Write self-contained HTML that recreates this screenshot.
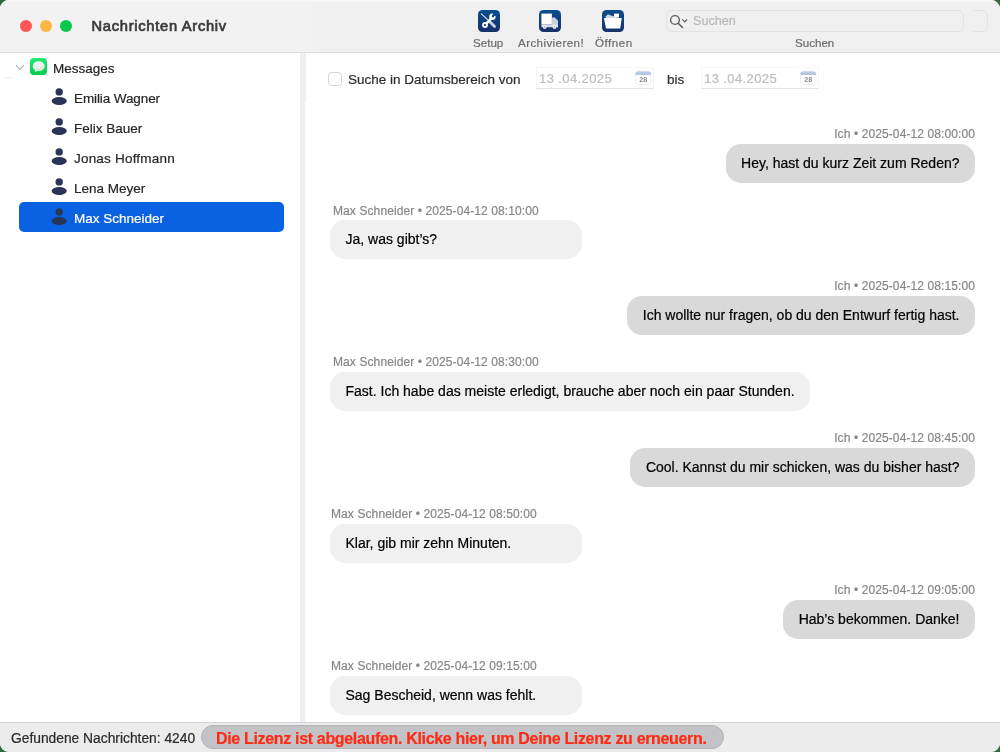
<!DOCTYPE html>
<html><head><meta charset="utf-8">
<style>
*{margin:0;padding:0;box-sizing:border-box}
html,body{width:1000px;height:752px;overflow:hidden;background:#2f6a3c;font-family:"Liberation Sans",sans-serif}
.win{will-change:transform;-webkit-text-stroke:0.2px currentColor;position:absolute;left:0;top:0;width:1000px;height:752px;background:#fff;border-radius:9px;overflow:hidden}
.abs{position:absolute;white-space:nowrap;line-height:1}
.toolbar{position:absolute;left:0;top:0;width:1000px;height:53px;background:#f0f0f0;border-bottom:1px solid #dedede}
.tl{position:absolute;top:20px;width:12px;height:12px;border-radius:50%}
.title{left:91.5px;top:19.4px;font-size:14.7px;font-weight:normal;color:#3b3b3b;-webkit-text-stroke:0.7px #3b3b3b;letter-spacing:0.72px}
.tbicon{position:absolute;top:10px;width:22px;height:22px}
.tblabel{top:37px;font-size:11.6px;color:#6b6b6b}
.search{position:absolute;left:666px;top:10px;width:298px;height:22px;border:1px solid #e3e3e3;border-radius:6px;background:#f0f0f0}
.search2{position:absolute;left:973px;top:10px;width:15px;height:22px;border:1px solid #e3e3e3;border-radius:6px;border-left:none;border-top-left-radius:0;border-bottom-left-radius:0;background:#f0f0f0}
.splitter{position:absolute;left:300px;top:53px;width:5px;height:669px;background:#efefef}
.srow{position:absolute;left:19px;width:265px;height:29px;border-radius:5px}
.sel{background:#0a62e2}
.name{left:74px;font-size:13.5px;color:#262626}
.person{position:absolute;left:51px;width:17px;height:18px}
.meta{font-size:12px;color:#878787;letter-spacing:0.1px}
.bub{position:absolute;height:39px;border-radius:15px;font-size:14px;color:#000;line-height:39px;padding:0 15.5px;white-space:nowrap}
.me{background:#d9d9d9;right:25px}
.them{background:#f0f0f0;left:330px;min-width:252px}
.status{position:absolute;left:0;top:722px;width:1000px;height:30px;background:#ececec;border-top:1px solid #d3d3d8}
.pill{position:absolute;left:201px;top:725px;width:523px;height:24px;border-radius:12px;background:#c3c3c7;border:1px solid #b3b3b7}
.date{position:absolute;top:67px;width:118px;height:22px;border:1px solid #f5f5f5;border-bottom:1px solid #e2e2e2}
.dtext{font-size:13px;color:#bdbdbd;letter-spacing:0.4px}
</style></head><body>
<div class="win">
  <div class="toolbar"><div class="abs" style="left:0;top:0;width:320px;height:52px;background:linear-gradient(90deg,#f2f2f2 0,#f2f2f2 308px,#f0f0f0 320px)"></div><div class="abs" style="left:0;top:0;width:1000px;height:2px;background:linear-gradient(#f8f8f8,#f3f3f3)"></div>
    <div class="tl" style="left:20px;background:#ff5458"></div>
    <div class="tl" style="left:40px;background:#ffb541"></div>
    <div class="tl" style="left:60px;background:#0ac84c"></div>
    <div class="abs title">Nachrichten Archiv</div>
    <svg class="tbicon" style="left:478px" viewBox="0 0 22 22">
      <defs><linearGradient id="g1" x1="0" y1="0" x2="0" y2="1"><stop offset="0" stop-color="#0b4d8c"/><stop offset="1" stop-color="#17306a"/></linearGradient></defs>
      <rect x="0" y="0" width="22" height="22" rx="4.5" fill="url(#g1)"/>
      <path d="M3.4 3.9 L9.6 9.6" stroke="#e3e9f0" stroke-width="1.1" stroke-linecap="round"/>
      <path d="M11 11 L16.6 16.6" stroke="#c9d3df" stroke-width="2.8" stroke-linecap="round"/>
      <path d="M7.4 14.6 L14 7.6" stroke="#fff" stroke-width="2.5" stroke-linecap="round"/>
      <circle cx="7" cy="15" r="2.9" fill="#fff"/><circle cx="7" cy="15" r="1.1" fill="#17306a"/>
      <circle cx="14.4" cy="6.8" r="3.2" fill="#fff"/><path d="M13.6 6.9 L15.5 2.6 L18.8 5.6 Z" fill="#0b4d8c"/><circle cx="15" cy="6.3" r="1.1" fill="#0b4d8c"/>
    </svg>
    <svg class="tbicon" style="left:539px" viewBox="0 0 22 22">
      <rect x="0" y="0" width="22" height="22" rx="4.5" fill="url(#g1)"/>
      <rect x="2.4" y="3.6" width="10.5" height="10.8" fill="#fff"/>
      <path d="M12.9 7.4 H15.8 L19 10.6 V17.3 H12.9 Z" fill="#c7d1de"/>
      <rect x="2.4" y="14.3" width="16.6" height="2.9" fill="#d6dde6"/>
      <circle cx="5.7" cy="17" r="1.9" fill="#e9eef3"/><circle cx="15.5" cy="17" r="1.9" fill="#e9eef3"/>
      <circle cx="5.7" cy="17" r="0.6" fill="#6f87a6"/><circle cx="15.5" cy="17" r="0.6" fill="#6f87a6"/>
    </svg>
    <svg class="tbicon" style="left:602px" viewBox="0 0 22 22">
      <rect x="0" y="0" width="22" height="22" rx="4.5" fill="url(#g1)"/>
      <path d="M12 3.6 H17 V7.5 H12 Z" fill="#fff"/>
      <path d="M3.5 6.5 L6 4.2 L9 5.5 L17 8 L16 9 H4 Z" fill="#d2d9e1"/>
      <path d="M1.9 8.1 H19.8 L18.2 18.4 H4 Z" fill="#fff"/>
    </svg>
    <div class="abs tblabel" style="left:473px">Setup</div>
    <div class="abs tblabel" style="left:518px;letter-spacing:0.4px">Archivieren!</div>
    <div class="abs tblabel" style="left:595px;letter-spacing:0.5px">Öffnen</div>
    <div class="search"></div>
    <svg class="abs" style="left:669px;top:14px" width="22" height="16" viewBox="0 0 22 16">
      <circle cx="6" cy="6" r="4.4" fill="none" stroke="#5f5f5f" stroke-width="1.4"/>
      <path d="M9.2 9.2 L13.5 13.5" stroke="#5f5f5f" stroke-width="1.5" stroke-linecap="round"/>
      <path d="M13.3 5.4 L15.7 7.8 L18.1 5.4" fill="none" stroke="#5f5f5f" stroke-width="1.2"/>
    </svg>
    <div class="abs" style="left:693px;top:14.5px;font-size:12.6px;color:#b8b8b8">Suchen</div>
    <div class="search2"></div>
    <div class="abs tblabel" style="left:795px">Suchen</div>
  </div>

  <!-- sidebar -->
  <div class="abs" style="left:5px;top:77px;width:8px;height:1px;background:#ededed"></div>
  <svg class="abs" style="left:14px;top:62px" width="12" height="10" viewBox="0 0 12 10">
    <path d="M2 3.2 L5.8 7.4 L9.8 3.2" fill="none" stroke="#b0b0b0" stroke-width="1.2"/>
  </svg>
  <svg class="abs" style="left:30px;top:58px" width="17" height="17" viewBox="0 0 17 17">
    <defs><linearGradient id="gm" x1="0" y1="0" x2="0" y2="1"><stop offset="0" stop-color="#1fea74"/><stop offset="1" stop-color="#06cb4e"/></linearGradient>
    <linearGradient id="gb" x1="0" y1="0" x2="0" y2="1"><stop offset="0" stop-color="#fff"/><stop offset="1" stop-color="#d3e6d6"/></linearGradient></defs>
    <rect width="17" height="17" rx="3.8" fill="url(#gm)"/>
    <ellipse cx="8.7" cy="8.2" rx="6" ry="5" fill="url(#gb)"/>
    <path d="M4.8 11 L5 14.3 L7.6 12.6 Z" fill="#dde9df"/>
  </svg>
  <div class="abs" style="left:53px;top:62px;font-size:13.5px;color:#262626">Messages</div>
  <div class="srow sel" style="top:202px;height:30px"></div>
  <svg class="person" style="top:88px" viewBox="0 0 17 18"><circle cx="8.2" cy="3.9" r="3.7" fill="#2a3457"/><ellipse cx="8.2" cy="13" rx="7.6" ry="4" fill="#2a3457"/></svg>
  <svg class="person" style="top:118px" viewBox="0 0 17 18"><circle cx="8.2" cy="3.9" r="3.7" fill="#2a3457"/><ellipse cx="8.2" cy="13" rx="7.6" ry="4" fill="#2a3457"/></svg>
  <svg class="person" style="top:148px" viewBox="0 0 17 18"><circle cx="8.2" cy="3.9" r="3.7" fill="#2a3457"/><ellipse cx="8.2" cy="13" rx="7.6" ry="4" fill="#2a3457"/></svg>
  <svg class="person" style="top:178px" viewBox="0 0 17 18"><circle cx="8.2" cy="3.9" r="3.7" fill="#2a3457"/><ellipse cx="8.2" cy="13" rx="7.6" ry="4" fill="#2a3457"/></svg>
  <svg class="person" style="top:208px" viewBox="0 0 17 18"><circle cx="8.2" cy="3.9" r="3.7" fill="#2a3457"/><ellipse cx="8.2" cy="13" rx="7.6" ry="4" fill="#2a3457"/></svg>
  <div class="abs name" style="top:92px;letter-spacing:-0.1px">Emilia Wagner</div>
  <div class="abs name" style="top:122px">Felix Bauer</div>
  <div class="abs name" style="top:152px;letter-spacing:0.2px">Jonas Hoffmann</div>
  <div class="abs name" style="top:182px">Lena Meyer</div>
  <div class="abs name" style="top:212px;color:#fff">Max Schneider</div>

  <div class="splitter"></div><div class="abs" style="left:305px;top:53px;width:1px;height:49px;background:#efefef"></div>

  <!-- date range -->
  <div class="abs" style="left:328px;top:71.5px;width:14px;height:14px;border:1px solid #d3d3d3;border-radius:3.5px;background:#fff"></div>
  <div class="abs" style="left:348px;top:73px;font-size:13.5px;color:#2e2e2e">Suche in Datumsbereich von</div>
  <div class="date" style="left:536px"></div>
  <div class="abs dtext" style="left:539px;top:72.3px">13 .04.2025</div>
  <svg class="abs cal" style="left:635px;top:70px" width="17" height="15" viewBox="0 0 17 15">
    <rect x="0.5" y="1.5" width="15.5" height="13" rx="2.5" fill="#fff" stroke="#e4ebf5" stroke-width="0.8"/>
    <path d="M0.5 4 Q0.5 1.5 3 1.5 H13.5 Q16 1.5 16 4 V5 H0.5 Z" fill="#b3c8e0"/><path d="M4.5 0.3 V2.5 M11.5 0.3 V2.5" stroke="#d8dde4" stroke-width="0.8"/>
    <text x="8.2" y="12.3" font-size="7.2" font-weight="bold" text-anchor="middle" fill="#8a8a8a" font-family="Liberation Sans">28</text>
  </svg>
  <div class="abs" style="left:667px;top:72.5px;font-size:13.5px;color:#2e2e2e">bis</div>
  <div class="date" style="left:701px"></div>
  <div class="abs dtext" style="left:704px;top:72.3px">13 .04.2025</div>
  <svg class="abs cal" style="left:800px;top:70px" width="17" height="15" viewBox="0 0 17 15">
    <rect x="0.5" y="1.5" width="15.5" height="13" rx="2.5" fill="#fff" stroke="#e4ebf5" stroke-width="0.8"/>
    <path d="M0.5 4 Q0.5 1.5 3 1.5 H13.5 Q16 1.5 16 4 V5 H0.5 Z" fill="#b3c8e0"/><path d="M4.5 0.3 V2.5 M11.5 0.3 V2.5" stroke="#d8dde4" stroke-width="0.8"/>
    <text x="8.2" y="12.3" font-size="7.2" font-weight="bold" text-anchor="middle" fill="#8a8a8a" font-family="Liberation Sans">28</text>
  </svg>

  <!-- messages -->
  <div class="abs meta" style="right:25px;top:128px">Ich • 2025-04-12 08:00:00</div>
  <div class="bub me" style="top:144px">Hey, hast du kurz Zeit zum Reden?</div>
  <div class="abs meta" style="left:333px;top:205px">Max Schneider • 2025-04-12 08:10:00</div>
  <div class="bub them" style="top:220px">Ja, was gibt’s?</div>
  <div class="abs meta" style="right:25px;top:280px">Ich • 2025-04-12 08:15:00</div>
  <div class="bub me" style="top:296px">Ich wollte nur fragen, ob du den Entwurf fertig hast.</div>
  <div class="abs meta" style="left:333px;top:356px">Max Schneider • 2025-04-12 08:30:00</div>
  <div class="bub them" style="top:372px">Fast. Ich habe das meiste erledigt, brauche aber noch ein paar Stunden.</div>
  <div class="abs meta" style="right:25px;top:432px">Ich • 2025-04-12 08:45:00</div>
  <div class="bub me" style="top:448px">Cool. Kannst du mir schicken, was du bisher hast?</div>
  <div class="abs meta" style="left:331px;top:508px">Max Schneider • 2025-04-12 08:50:00</div>
  <div class="bub them" style="top:524px">Klar, gib mir zehn Minuten.</div>
  <div class="abs meta" style="right:25px;top:584px">Ich • 2025-04-12 09:05:00</div>
  <div class="bub me" style="top:600px">Hab’s bekommen. Danke!</div>
  <div class="abs meta" style="left:331px;top:660px">Max Schneider • 2025-04-12 09:15:00</div>
  <div class="bub them" style="top:676px">Sag Bescheid, wenn was fehlt.</div>

  <div class="status">
    <div class="abs" style="left:11px;top:9px;font-size:13.8px;color:#2a2a2a">Gefundene Nachrichten: 4240</div>
  </div>
  <div class="pill"></div>
  <div class="abs" style="left:216px;top:731.2px;font-size:16px;font-weight:bold;color:#ff2a12;letter-spacing:-0.33px">Die Lizenz ist abgelaufen. Klicke hier, um Deine Lizenz zu erneuern.</div>
</div>
</body></html>
